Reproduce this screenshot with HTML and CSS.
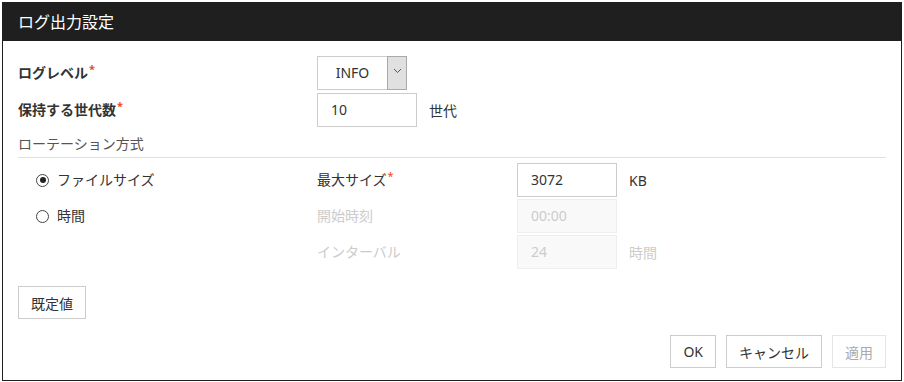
FILE: index.html
```html
<!DOCTYPE html>
<html lang="ja">
<head>
    <meta charset="UTF-8">
    <title>ログ出力設定</title>
    <link rel="stylesheet" href="styles.css">
</head>
<body>
    <div class="dialog">
        <div class="dialog-header">ログ出力設定</div>
        <div class="dialog-body">
            <div class="row">
                <div class="label strong">ログレベル<span class="req">*</span></div>
                <div class="select">
                    <span class="select-value">INFO</span>
                    <span class="select-arrow">
                        <svg width="9" height="6" viewBox="0 0 9 6"><path d="M1 1 L4.5 4.5 L8 1" fill="none" stroke="#555" stroke-width="1"/></svg>
                    </span>
                </div>
            </div>
            <div class="row">
                <div class="label strong">保持する世代数<span class="req">*</span></div>
                <div class="input">10</div>
                <span class="unit">世代</span>
            </div>

            <div class="section-title">ローテーション方式</div>

            <div class="rotation">
                <div class="row">
                    <div class="label radio-col"><span class="radio checked"></span>ファイルサイズ</div>
                    <div class="sub-label">最大サイズ<span class="req">*</span></div>
                    <div class="input">3072</div>
                    <span class="unit">KB</span>
                </div>
                <div class="row">
                    <div class="label radio-col"><span class="radio"></span>時間</div>
                    <div class="sub-label disabled">開始時刻</div>
                    <div class="input disabled">00:00</div>
                </div>
                <div class="row">
                    <div class="label radio-col"></div>
                    <div class="sub-label disabled">インターバル</div>
                    <div class="input disabled">24</div>
                    <span class="unit disabled">時間</span>
                </div>
            </div>

            <button class="btn">既定値</button>
        </div>
        <div class="dialog-footer">
            <button class="btn">OK</button>
            <button class="btn">キャンセル</button>
            <button class="btn disabled">適用</button>
        </div>
    </div>
</body>
</html>
```

FILE: styles.css
```css
body, html {
    margin: 0;
    padding: 0;
    background: #fff;
    font-family: "Noto Sans", "Noto Sans CJK JP", sans-serif;
    font-size: 14px;
    color: #333;
}
.dialog {
    margin: 2px;
    width: 900px;
    height: 379px;
    box-sizing: border-box;
    border: 1px solid #1f1f1f;
    display: flex;
    flex-direction: column;
}
.dialog-header {
    height: 38px;
    background: #1f1f1f;
    color: #fff;
    font-size: 16px;
    line-height: 38px;
    padding-left: 15px;
}
.dialog-body {
    padding: 15px 15px 0 15px;
    flex: 1;
}
.row {
    display: flex;
    align-items: center;
    height: 34px;
    margin-bottom: 3px;
}
.label {
    width: 299px;
    flex-shrink: 0;
    line-height: 20px;
}
.strong {
    font-weight: bold;
}
.req {
    color: #e8491d;
    font-size: 11px;
    vertical-align: top;
    line-height: 12px;
    margin-left: 1px;
}
.select {
    display: flex;
    width: 90px;
    height: 34px;
    box-sizing: border-box;
    border: 1px solid #ccc;
}
.select-value {
    flex: 1;
    text-align: center;
    line-height: 32px;
}
.select-arrow {
    width: 20px;
    background: #e0e0e0;
    border: 1px solid #aaa;
    margin: -1px -1px -1px 0;
    display: flex;
    justify-content: center;
    padding-top: 11px;
    box-sizing: border-box;
}
.input {
    width: 100px;
    height: 34px;
    box-sizing: border-box;
    border: 1px solid #ccc;
    padding-left: 13px;
    line-height: 32px;
    flex-shrink: 0;
}
.input.disabled {
    background: #f9f9f9;
    border-color: #eee;
    color: #ccc;
}
.unit {
    margin-left: 12px;
}
.disabled {
    color: #ccc;
}
.section-title {
    color: #555;
    line-height: 20px;
    padding-top: 4px;
    padding-bottom: 3px;
    border-bottom: 1px solid #e0e0e0;
    margin-bottom: 5px;
}
.rotation .row {
    margin-bottom: 2px;
}
.radio-col {
    display: flex;
    align-items: center;
    padding-left: 18px;
    box-sizing: border-box;
}
.radio {
    width: 11px;
    height: 11px;
    border: 1px solid #444;
    border-radius: 50%;
    margin-right: 8px;
    position: relative;
    box-sizing: content-box;
}
.radio.checked::after {
    content: "";
    position: absolute;
    left: 2.5px;
    top: 2.5px;
    width: 6px;
    height: 6px;
    border-radius: 50%;
    background: #222;
}
.sub-label {
    width: 200px;
    flex-shrink: 0;
    line-height: 20px;
}
.btn {
    font-family: inherit;
    font-size: 14px;
    color: #333;
    background: #fff;
    border: 1px solid #ccc;
    height: 33px;
    padding: 0 12px;
    cursor: pointer;
    margin-top: 15px;
}
.btn.disabled {
    color: #aaa;
    border-color: #e5e5e5;
}
.dialog-footer {
    display: flex;
    justify-content: flex-end;
    gap: 10px;
    padding: 0 15px 12px 0;
}
.dialog-footer .btn {
    margin-top: 0;
}
```
